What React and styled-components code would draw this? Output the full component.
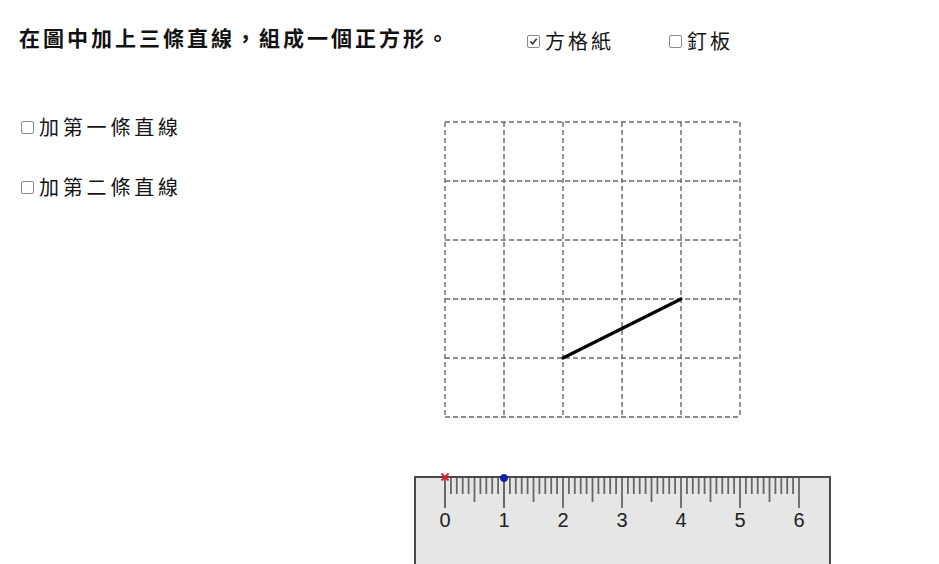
import React, { useState } from 'react';
import styled, { createGlobalStyle } from 'styled-components';

const GlobalStyle = createGlobalStyle`
  html, body {
    margin: 0;
    padding: 0;
    background: #ffffff;
  }
  body {
    font-family: "Noto Sans CJK TC", "Noto Sans", sans-serif;
    color: #111;
  }
`;

const CELL = 59;
const GRID_X = 45;
const GRID_Y = 22;

function CheckBox({ checked, label, onToggle, spacing }) {
  return (
    <CheckRow onClick={onToggle}>
      <Box>
        {checked && (
          <svg width="9" height="9" viewBox="0 0 10 10">
            <path d="M1.5 5 L4 7.6 L8.6 2" fill="none" stroke="#333" strokeWidth="1.8" />
          </svg>
        )}
      </Box>
      <Label $spacing={spacing}>{label}</Label>
    </CheckRow>
  );
}

function Board() {
  const lines = [];
  for (let i = 0; i <= 5; i++) {
    lines.push(
      <line key={'v' + i} x1={GRID_X + i * CELL} y1={GRID_Y} x2={GRID_X + i * CELL} y2={GRID_Y + 5 * CELL}
        stroke="#6a6a6a" strokeWidth="1.4" strokeDasharray="5 3" />
    );
    lines.push(
      <line key={'h' + i} x1={GRID_X} y1={GRID_Y + i * CELL} x2={GRID_X + 5 * CELL} y2={GRID_Y + i * CELL}
        stroke="#6a6a6a" strokeWidth="1.4" strokeDasharray="5 3" />
    );
  }

  const rulerTop = 377;
  const ticks = [];
  for (let i = 0; i <= 60; i++) {
    const x = GRID_X + i * (CELL / 10);
    let len = 17;
    let w = 1.8;
    let color = '#666';
    if (i % 10 === 0) { len = 31; }
    else if (i % 5 === 0) { len = 25; }
    if (i === 0 || i === 10) { color = '#111'; w = 1.2; }
    ticks.push(
      <line key={'t' + i} x1={x} y1={rulerTop + 1} x2={x} y2={rulerTop + len} stroke={color} strokeWidth={w} />
    );
  }
  const labels = [0, 1, 2, 3, 4, 5, 6].map((n) => (
    <text key={'l' + n} x={GRID_X + n * CELL} y={rulerTop + 50} textAnchor="middle"
      fontFamily='"Liberation Sans", Arial, sans-serif' fontSize="20" fill="#222">{n}</text>
  ));

  return (
    <Canvas width="539" height="464" viewBox="0 0 539 464">
      {lines}
      <line x1={GRID_X + 2 * CELL} y1={GRID_Y + 4 * CELL} x2={GRID_X + 4 * CELL} y2={GRID_Y + 3 * CELL}
        stroke="#000" strokeWidth="3.2" strokeLinecap="round" />
      <rect x="15" y={rulerTop} width="415" height="120" fill="#e6e6e6" stroke="#4a4a4a" strokeWidth="2" />
      {ticks}
      {labels}
      <g stroke="#e02020" strokeWidth="1.8">
        <line x1={GRID_X - 3.5} y1={rulerTop - 3.5} x2={GRID_X + 3.5} y2={rulerTop + 3.5} />
        <line x1={GRID_X - 3.5} y1={rulerTop + 3.5} x2={GRID_X + 3.5} y2={rulerTop - 3.5} />
      </g>
      <circle cx={GRID_X + CELL} cy={rulerTop + 1} r="3.6" fill="#1020c0" stroke="#0a1480" strokeWidth="0.8" />
    </Canvas>
  );
}

export default function App() {
  const [grid, setGrid] = useState(true);
  const [pegs, setPegs] = useState(false);
  const [first, setFirst] = useState(false);
  const [second, setSecond] = useState(false);

  return (
    <Page>
      <GlobalStyle />
      <Header>
        <Title>在圖中加上三條直線，組成一個正方形。</Title>
        <Options>
          <CheckBox checked={grid} label="方格紙" spacing="3px" onToggle={() => setGrid(!grid)} />
          <CheckBox checked={pegs} label="釘板" spacing="3px" onToggle={() => setPegs(!pegs)} />
        </Options>
      </Header>
      <Body>
        <Side>
          <CheckBox checked={first} label="加第一條直線" spacing="3.8px" onToggle={() => setFirst(!first)} />
          <CheckBox checked={second} label="加第二條直線" spacing="3.8px" onToggle={() => setSecond(!second)} />
        </Side>
        <Board />
      </Body>
    </Page>
  );
}

const Page = styled.div`
  width: 939px;
  height: 564px;
  overflow: hidden;
  display: flex;
  flex-direction: column;
`;

const Header = styled.div`
  display: flex;
  align-items: flex-start;
  height: 100px;
  padding-left: 19px;
`;

const Title = styled.h1`
  margin: 23px 0 0;
  font-size: 21px;
  line-height: 28px;
  font-weight: 700;
  letter-spacing: 3px;
  white-space: nowrap;
  width: 508px;
`;

const Options = styled.div`
  display: flex;
  gap: 55px;
  margin-top: 27px;
`;

const CheckRow = styled.label`
  display: flex;
  align-items: center;
  gap: 5px;
  cursor: pointer;
  user-select: none;
`;

const Box = styled.span`
  box-sizing: border-box;
  width: 13px;
  height: 13px;
  border: 1.6px solid #8a8a8a;
  border-radius: 2px;
  background: #fff;
  display: flex;
  align-items: center;
  justify-content: center;
  flex-shrink: 0;
`;

const Label = styled.span`
  font-size: 20px;
  line-height: 28px;
  letter-spacing: ${(p) => p.$spacing || '0'};
  color: #151515;
`;

const Body = styled.div`
  display: flex;
  flex: 1;
`;

const Side = styled.div`
  width: 379px;
  padding: 13px 0 0 21px;
  display: flex;
  flex-direction: column;
  gap: 32px;
`;

const Canvas = styled.svg`
  display: block;
  flex-shrink: 0;
`;
